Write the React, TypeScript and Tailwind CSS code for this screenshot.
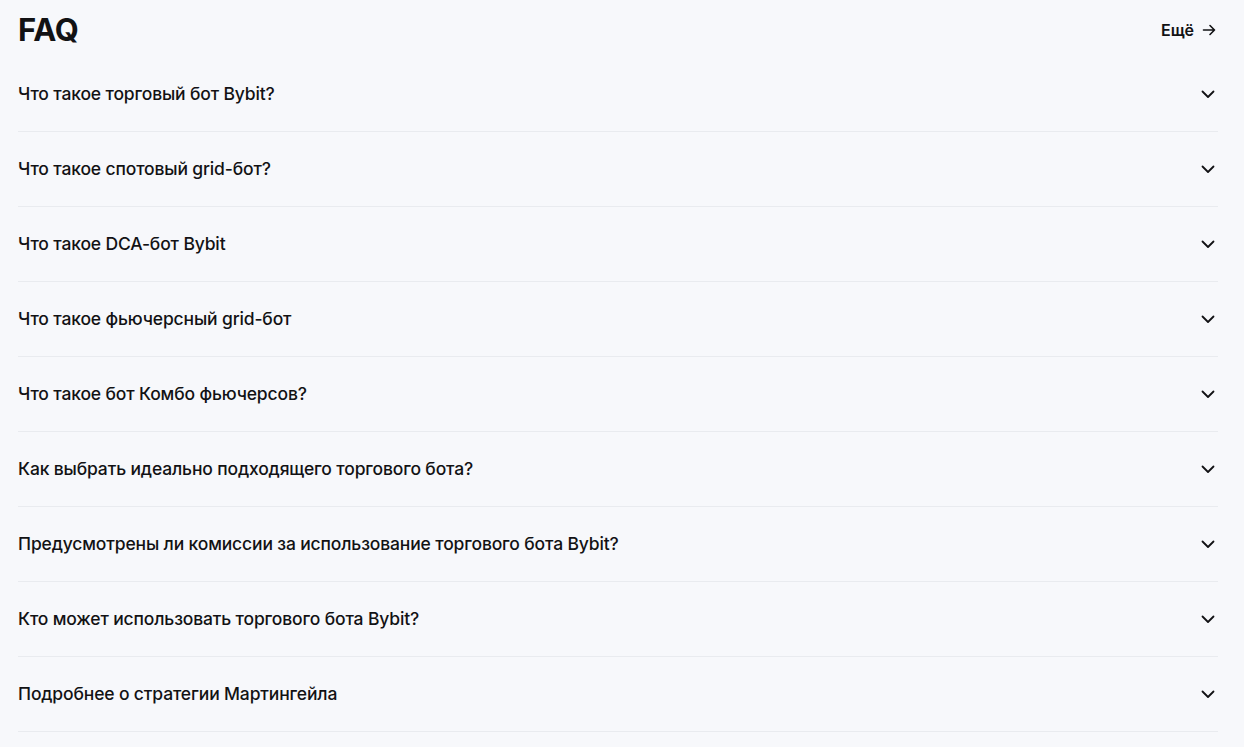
import React from "react";

const questions = [
  "Что такое торговый бот Bybit?",
  "Что такое спотовый grid-бот?",
  "Что такое DCA-бот Bybit",
  "Что такое фьючерсный grid-бот",
  "Что такое бот Комбо фьючерсов?",
  "Как выбрать идеально подходящего торгового бота?",
  "Предусмотрены ли комиссии за использование торгового бота Bybit?",
  "Кто может использовать торгового бота Bybit?",
  "Подробнее о стратегии Мартингейла",
];

const Chevron = () => (
  <svg width="16" height="16" viewBox="0 0 16 16" fill="none">
    <path
      d="M2.5 5.5L8 11l5.5-5.5"
      stroke="#121214"
      strokeWidth="1.8"
      strokeLinecap="round"
      strokeLinejoin="round"
    />
  </svg>
);

const Arrow = () => (
  <svg width="14" height="14" viewBox="0 0 14 14" fill="none">
    <path
      d="M1.5 7h11M8 2.5L12.5 7 8 11.5"
      stroke="#121214"
      strokeWidth="1.6"
      strokeLinecap="round"
      strokeLinejoin="round"
    />
  </svg>
);

const App = () => {
  return (
    <div
      className="min-h-[747px] bg-[#f7f8fb] text-[#121214]"
      style={{ fontFamily: "Inter, 'Noto Sans', sans-serif" }}
    >
      <div className="w-[1200px] ml-[18px]">
        {/* header */}
        <div className="flex justify-between items-center h-[57px] pt-[2px]">
          <h2 className="text-[31px] font-bold leading-none tracking-[-0.2px]">FAQ</h2>
          <a href="#" className="flex items-center gap-[8px] text-[16px] font-semibold mr-[2px]">
            Ещё
            <Arrow />
          </a>
        </div>
        {/* list */}
        <ul>
          {questions.map((q) => (
            <li
              key={q}
              className="flex justify-between items-center h-[75px] border-b border-[#e9ebef]"
            >
              <span className="text-[17.5px] font-medium tracking-[-0.15px]">{q}</span>
              <span className="mr-[2px]">
                <Chevron />
              </span>
            </li>
          ))}
        </ul>
      </div>
    </div>
  );
};

export default App;
